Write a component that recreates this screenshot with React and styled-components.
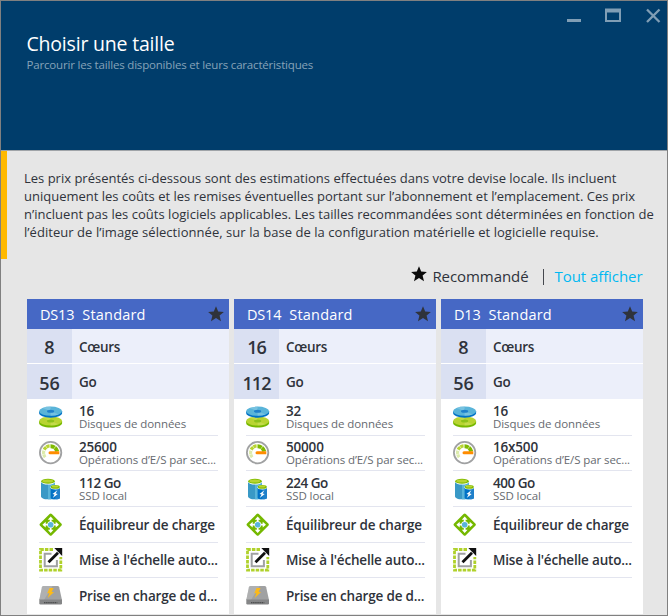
import React from "react";
import styled, { createGlobalStyle } from "styled-components";

const GlobalStyle = createGlobalStyle`
  * { box-sizing: border-box; }
  body { margin: 0; background: #e6e6e6; }
`;

const Blade = styled.div`
  width: 668px;
  height: 616px;
  display: flex;
  flex-direction: column;
  overflow: hidden;
  border: 1px solid #808080;
  background: #e6e6e6;
  color: #2f333b;
  font-family: "Open Sans", "Noto Sans", sans-serif;
`;

const Header = styled.header`
  flex: none;
  height: 150px;
  display: flex;
  justify-content: space-between;
  align-items: flex-start;
  padding-left: 25.5px;
  background: #003d6b;
  border-bottom: 1px solid #a0a4a8;
`;

const Heading = styled.div`
  display: flex;
  flex-direction: column;
  padding-top: 30px;
  white-space: nowrap;
`;

const Title = styled.h1`
  margin: 0;
  font-size: 19.5px;
  font-weight: 400;
  line-height: 26px;
  letter-spacing: -0.2px;
  color: #fff;
`;

const Subtitle = styled.p`
  margin: 0;
  font-size: 11.5px;
  font-weight: 500;
  line-height: 16px;
  letter-spacing: -0.18px;
  color: #86a3b9;
`;

const WindowButtons = styled.div`
  display: flex;
  gap: 22px;
  padding: 6px 5px 0 0;
`;

const Notice = styled.section`
  flex: none;
  height: 108px;
  padding: 18px 0 0 17px;
  border-left: 6px solid #ffb900;
`;

const NoticeLine = styled.div`
  font-size: 13px;
  line-height: 18px;
  white-space: nowrap;
  letter-spacing: ${(p) => p.$spacing || 0}px;
`;

const FilterBar = styled.div`
  flex: none;
  height: 40px;
  display: flex;
  justify-content: flex-end;
  padding: 7px 24.5px 0 0;
  font-size: 15px;
  line-height: 20px;
  letter-spacing: -0.07px;
  white-space: nowrap;
`;

const Legend = styled.span`
  display: flex;
  gap: 5px;
`;

const Divider = styled.span`
  width: 1px;
  height: 16px;
  margin: 3px 11px 0 14px;
  background: #45484e;
`;

const ShowAll = styled.a`
  color: #00b9f2;
`;

const Cards = styled.main`
  flex: none;
  height: 315px;
  display: grid;
  grid-template-columns: repeat(3, 202px);
  gap: 5px;
  padding-left: 26px;
`;

const Card = styled.article`
  display: flex;
  flex-direction: column;
  background: #fff;
  white-space: nowrap;
  overflow: hidden;
`;

const CardHeader = styled.div`
  flex: none;
  height: 30px;
  display: flex;
  align-items: center;
  padding: 0 5px 0 13px;
  background: #4668c5;
  color: #fff;
  font-size: 14.5px;
`;

const SizeName = styled.span`
  margin-right: 8px;
  letter-spacing: -0.2px;
`;

const Tier = styled.span`
  flex: 1;
  letter-spacing: 0.2px;
`;

const Spec = styled.div`
  flex: none;
  height: ${(p) => p.$height}px;
  display: flex;
  align-items: center;
  background: linear-gradient(90deg, #dae0f2 45px, #eceffa 45px);
  & + & { margin-top: 1px; }
`;

const SpecNumber = styled.span`
  width: 45px;
  padding-top: ${(p) => p.$drop}px;
  text-align: center;
  font-size: 18px;
  font-weight: 600;
  line-height: 24px;
  letter-spacing: ${(p) => (p.$tight ? -1 : 0)}px;
`;

const SpecLabel = styled.span`
  margin: 1px 0 0 7px;
  font-size: 13.5px;
  font-weight: 600;
  letter-spacing: -0.3px;
`;

const Features = styled.div`
  display: grid;
  grid-template-rows: 37px 35px 36px 36px 35px 36px;
  padding: 0 12px;
`;

const Feature = styled.div`
  display: flex;
  align-items: center;
  gap: 16px;
  border-bottom: ${(p) => (p.$last ? 0 : 1)}px solid #e3e5ef;
`;

const FeatureText = styled.div`
  display: flex;
  flex-direction: column;
`;

const FeatureValue = styled.span`
  font-size: 13.5px;
  font-weight: 600;
  line-height: 14px;
  letter-spacing: ${(p) => p.$spacing}px;
`;

const FeatureName = styled.span`
  font-size: 11.5px;
  font-weight: 500;
  line-height: 12px;
  letter-spacing: -0.09px;
  color: #666a70;
`;

const Icon = styled.svg`
  flex: none;
  display: block;
`;

const Star = ({ color }) => (
  <Icon width="16" height="16" viewBox="0 0 16 16">
    <path fill={color} d="M8 .2 10.200 5.500 15.900 5.900 11.600 9.500 13 15.200 8 12.100 3 15.200 4.400 9.500.1 5.900 5.800 5.500Z" />
  </Icon>
);

const Disks = () => (
  <Icon width="24" height="24" viewBox="0 0 24 24">
    <path fill="#77b800" d="M.1 16v2c0 2.500 5 4.600 11.500 4.600s11.500-2.100 11.500-4.600v-2z" />
    <ellipse cx="11.600" cy="16" rx="11.500" ry="4.600" fill="#b8d432" />
    <path fill="#cbe05d" d="M11.600 16 3.500 12.800q3.500-1.400 8.100-1.400zM11.600 16l8.200 3.200q-3.600 1.400-8.200 1.400z" opacity=".6" />
    <ellipse cx="11.600" cy="16" rx="3.600" ry="1.500" fill="#8cc21a" />
    <path fill="#0072c6" d="M.1 6.200v1.900c0 2.500 5 4.600 11.500 4.600s11.500-2.100 11.500-4.600v-1.900z" />
    <ellipse cx="11.600" cy="6.200" rx="11.500" ry="4.600" fill="#59b4d9" />
    <path fill="#8ccbe5" d="M11.600 6.200 3.500 3q3.500-1.400 8.100-1.400zM11.600 6.200l8.200 3.200q-3.600 1.400-8.200 1.400z" opacity=".6" />
    <ellipse cx="11.600" cy="6.200" rx="3.600" ry="1.500" fill="#1f80ca" />
  </Icon>
);

const Gauge = () => (
  <Icon width="24" height="24" viewBox="0 0 24 24">
    <circle cx="11.600" cy="11.600" r="10.700" fill="#fff" stroke="#a0a1a2" strokeWidth="1.800" />
    <path d="M6.200 16.300A7.300 7.300 0 0 1 5 9.100" fill="none" stroke="#dcebac" strokeWidth="3.200" strokeDasharray="3.200 .5" />
    <path d="M5.200 8.600A7.300 7.300 0 0 1 11 4.800" fill="none" stroke="#b8d432" strokeWidth="3.400" strokeDasharray="3.100 .4" />
    <path d="M11.500 5.200A6.900 6.900 0 0 1 18.300 10.600" fill="none" stroke="#7fba00" strokeWidth="4" strokeDasharray="4.300 .4" />
    <path fill="#ff8c00" d="M11 10.200h9.300v3H11a1.500 1.500 0 0 1 0-3z" />
  </Icon>
);

const LocalSsd = () => (
  <Icon width="24" height="24" viewBox="0 0 24 24">
    <path fill="#3999c6" d="M2 4.500v14.700C2 21.200 5 22.300 9 22.300h3V4.500z" />
    <path fill="#59b4d9" d="M9 4.500h7v17.800H9z" />
    <ellipse cx="9" cy="4.700" rx="7" ry="2.900" fill="#fff" />
    <ellipse cx="9" cy="4.300" rx="6.800" ry="2.500" fill="#7fba00" />
    <ellipse cx="8.700" cy="4" rx="5.400" ry="1.500" fill="#b8d432" />
    <path fill="#0072c6" d="M11.600 11v9.700c0 1 2 1.600 4.700 1.600s4.700-.6 4.700-1.600V11z" />
    <path fill="#1f80ca" d="M16.300 11H21v9.700c0 1-2 1.600-4.700 1.600z" />
    <ellipse cx="16.300" cy="10.300" rx="4.700" ry="2.200" fill="#fff" />
    <ellipse cx="16.300" cy="9.900" rx="4.500" ry="1.900" fill="#7fba00" />
    <ellipse cx="16.100" cy="9.600" rx="3.300" ry="1" fill="#b8d432" />
    <path fill="#fff" d="m18.400 13.300-4.900 3.700 2.100.4-1.900 3.600 5-4.100-2.100-.5z" />
  </Icon>
);

const LoadBalancer = () => (
  <Icon width="24" height="24" viewBox="0 0 24 24">
    <rect x="3.400" y="3.400" width="16.600" height="16.600" rx="1.600" fill="#75b800" transform="rotate(45 11.700 11.700)" />
    <path d="M11.700 5v13.400M5 11.700h13.400" stroke="#fff" strokeWidth="1.800" />
    <path fill="#fff" d="m11.700 3.400 2.900 3.300H8.800zM11.700 20l2.900-3.300H8.800zM3.400 11.700l3.300-2.900v5.800zM20 11.700l-3.300-2.900v5.800z" />
    <circle cx="11.700" cy="11.700" r="3.400" fill="#fff" />
    <circle cx="11.700" cy="11.700" r="2.800" fill="#59b4d9" />
  </Icon>
);

const AutoScale = () => (
  <Icon width="24" height="24" viewBox="0 0 24 24">
    <path d="M14 1.500H1.500v20.700h20.300V9" fill="none" stroke="#b0d12b" strokeWidth="2.800" strokeDasharray="3.500 1.100" />
    <path d="M12.500 5.700H5.700v12.500h12.200V12" fill="none" stroke="#a0a1a2" strokeWidth="2" />
    <path d="M9.500 14.200 19 4.700" stroke="#111" strokeWidth="2.800" />
    <path fill="#111" d="M15.300 0h7.900v7.900z" />
  </Icon>
);

const PremiumDisk = () => (
  <Icon width="24" height="24" viewBox="0 0 24 24">
    <path fill="#a0a1a2" d="M4.600 2h14q1.300 0 1.600 1.300L23 16H.3L3 3.300Q3.300 2 4.600 2z" />
    <path fill="#b9babb" d="M4.600 2h9L5 16H.3L3 3.300Q3.300 2 4.600 2z" opacity=".6" />
    <path fill="#858687" d="M.3 15.600h22.700v3.700q0 1.200-1.200 1.200H1.500Q.3 20.500.3 19.300z" />
    <path stroke="#4c4d4e" strokeWidth="1.400" strokeDasharray="1.500 .6" d="M5 18.600h13.300" />
    <path fill="#fcba19" d="M10.600 4h4l-2 3.900h2.500L8.700 14l1.700-4.700H8.200z" />
  </Icon>
);

const WindowIcon = ({ children }) => (
  <Icon width="18" height="18" viewBox="0 0 18 18" fill="none" stroke="#809eb5">
    {children}
  </Icon>
);

const sizes = [
  { name: "DS13", cores: "8", ram: "56", disks: "16", iops: "25600", ssd: "112 Go", premium: true },
  { name: "DS14", cores: "16", ram: "112", disks: "32", iops: "50000", ssd: "224 Go", premium: true },
  { name: "D13", cores: "8", ram: "56", disks: "16", iops: "16x500", ssd: "400 Go" },
];

const FeatureRow = ({ icon, value, name, spacing = -0.18, last }) => (
  <Feature $last={last}>
    {icon}
    <FeatureText>
      <FeatureValue $spacing={spacing}>{value}</FeatureValue>
      {name && <FeatureName>{name}</FeatureName>}
    </FeatureText>
  </Feature>
);

const SizeCard = ({ size }) => (
  <Card>
    <CardHeader>
      <SizeName>{size.name}</SizeName>
      <Tier>Standard</Tier>
      <Star color="#2f333b" />
    </CardHeader>
    <Spec $height={34}>
      <SpecNumber $drop={1} $tight={size.cores === "16"}>{size.cores}</SpecNumber>
      <SpecLabel>Cœurs</SpecLabel>
    </Spec>
    <Spec $height={35}>
      <SpecNumber $drop={2} $tight={size.ram === "112"}>{size.ram}</SpecNumber>
      <SpecLabel>Go</SpecLabel>
    </Spec>
    <Features>
      <FeatureRow icon={<Disks />} value={size.disks} name="Disques de données" />
      <FeatureRow icon={<Gauge />} value={size.iops} name="Opérations d’E/S par sec..." />
      <FeatureRow icon={<LocalSsd />} value={size.ssd} name="SSD local" spacing={-0.5} />
      <FeatureRow icon={<LoadBalancer />} value="Équilibreur de charge" />
      <FeatureRow icon={<AutoScale />} value="Mise à l'échelle auto..." />
      {size.premium && <FeatureRow icon={<PremiumDisk />} value="Prise en charge de d..." last />}
    </Features>
  </Card>
);

export default function App() {
  return (
    <>
      <GlobalStyle />
      <Blade>
        <Header>
          <Heading>
            <Title>Choisir une taille</Title>
            <Subtitle>Parcourir les tailles disponibles et leurs caractéristiques</Subtitle>
          </Heading>
          <WindowButtons>
            <WindowIcon><path strokeWidth="3" d="M3 13.500h14" /></WindowIcon>
            <WindowIcon><path strokeWidth="2" d="M2 2v12h14V2" /><path strokeWidth="4" d="M1 3.500h16" /></WindowIcon>
            <WindowIcon><path strokeWidth="2.300" d="m3 2.500 12.500 12.500M15.500 2.500 3 15" /></WindowIcon>
          </WindowButtons>
        </Header>
        <Notice>
          <NoticeLine>Les prix présentés ci-dessous sont des estimations effectuées dans votre devise locale. Ils incluent</NoticeLine>
          <NoticeLine>uniquement les coûts et les remises éventuelles portant sur l’abonnement et l’emplacement. Ces prix</NoticeLine>
          <NoticeLine $spacing={0.03}>n’incluent pas les coûts logiciels applicables. Les tailles recommandées sont déterminées en fonction de</NoticeLine>
          <NoticeLine $spacing={0.05}>l’éditeur de l’image sélectionnée, sur la base de la configuration matérielle et logicielle requise.</NoticeLine>
        </Notice>
        <FilterBar>
          <Legend>
            <Star color="#0b0b0b" />
            Recommandé
          </Legend>
          <Divider />
          <ShowAll>Tout afficher</ShowAll>
        </FilterBar>
        <Cards>
          {sizes.map((size) => <SizeCard key={size.name} size={size} />)}
        </Cards>
      </Blade>
    </>
  );
}
